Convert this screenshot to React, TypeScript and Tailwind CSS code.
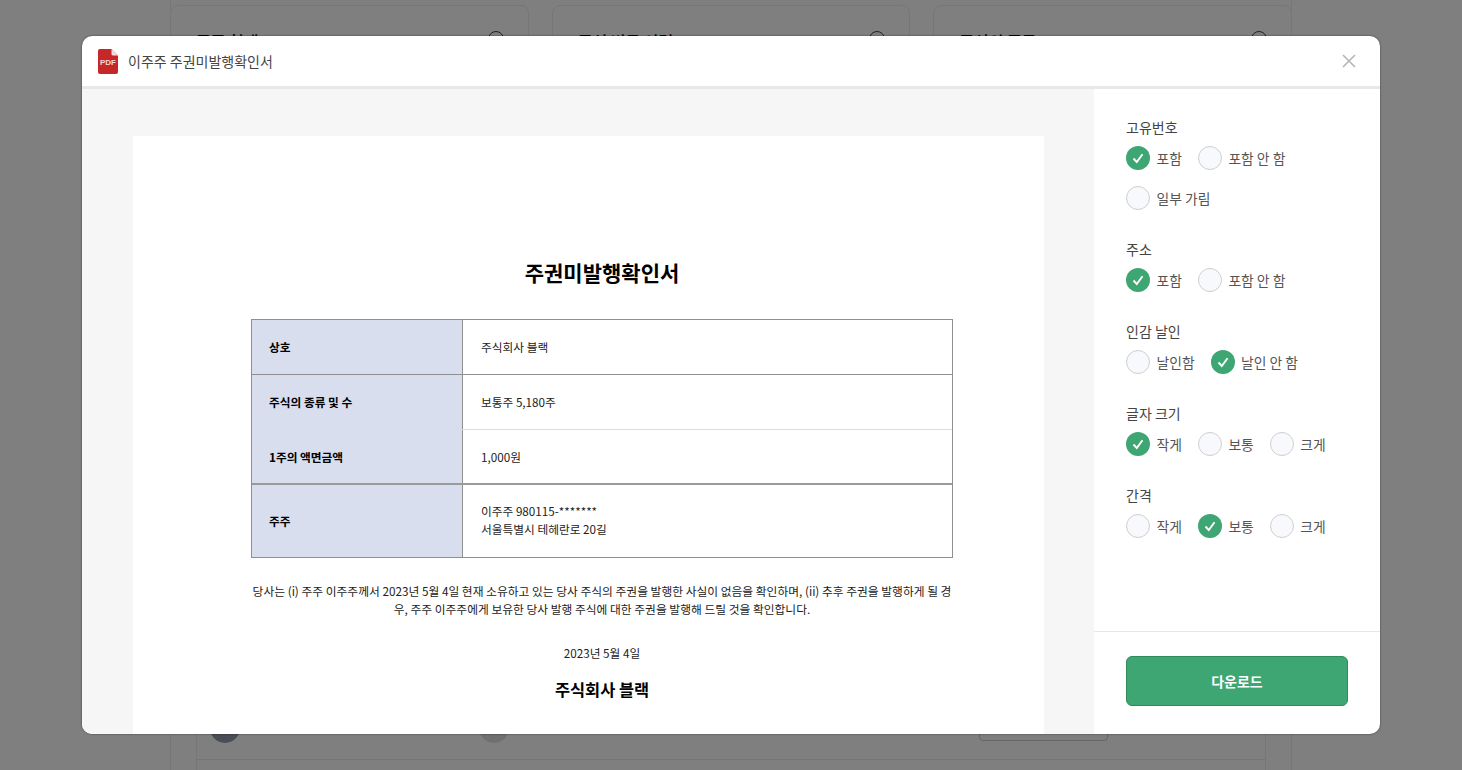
const FONT = "[font-family:'Noto_Sans_CJK_KR','Noto_Sans',sans-serif]";

type Option = { label: string; checked?: boolean };

const GROUPS: { title: string; options: Option[] }[] = [
  {
    title: "고유번호",
    options: [{ label: "포함", checked: true }, { label: "포함 안 함" }, { label: "일부 가림" }],
  },
  { title: "주소", options: [{ label: "포함", checked: true }, { label: "포함 안 함" }] },
  { title: "인감 날인", options: [{ label: "날인함" }, { label: "날인 안 함", checked: true }] },
  {
    title: "글자 크기",
    options: [{ label: "작게", checked: true }, { label: "보통" }, { label: "크게" }],
  },
  {
    title: "간격",
    options: [{ label: "작게" }, { label: "보통", checked: true }, { label: "크게" }],
  },
];

function PdfIcon() {
  return (
    <svg width="20" height="25" viewBox="0 0 20 25" className="shrink-0">
      <path d="M2 0h11.5L20 6.5V23a2 2 0 0 1-2 2H2a2 2 0 0 1-2-2V2a2 2 0 0 1 2-2z" fill="#c62828" />
      <path d="M13.5 0L20 6.5h-5a1.5 1.5 0 0 1-1.5-1.5z" fill="#f6d9d9" />
      <text x="10" y="16" textAnchor="middle" fontSize="8" fontWeight="700" fill="#f6d5d5" fontFamily="Liberation Sans, sans-serif">
        PDF
      </text>
    </svg>
  );
}

function Radio({ label, checked }: Option) {
  return (
    <div className="flex h-6 items-center gap-[6.5px]">
      {checked ? (
        <span className="flex h-6 w-6 items-center justify-center rounded-full bg-[#3da672]">
          <svg width="14" height="14" viewBox="0 0 14 14" fill="none">
            <path d="M2.5 7.5L5.8 11L11.5 3.2" stroke="#fff" strokeWidth="1.9" />
          </svg>
        </span>
      ) : (
        <span className="h-6 w-6 rounded-full border border-[#cfcfcf] bg-[#f8f9fc]" />
      )}
      <span className="text-[13.8px] leading-6 text-[#555]">{label}</span>
    </div>
  );
}

function TableRow({ head, className, children }: { head: string; className: string; children: React.ReactNode }) {
  return (
    <div className={`flex ${className}`}>
      <div className="flex w-[211px] shrink-0 items-center border-r border-[#8f8f8f] bg-[#d9deef] pl-[17px] text-[11.7px] font-bold text-black">
        {head}
      </div>
      <div className="flex flex-1 flex-col justify-center pl-[18px] text-[11.7px] leading-[18px] text-[#222]">{children}</div>
    </div>
  );
}

function BackCard({ title }: { title: string }) {
  return (
    <div className="flex h-[120px] flex-1 items-start justify-between rounded-lg border border-[#777] pl-[25px] pr-[24px] pt-[23px]">
      <span className="text-base font-medium text-black">{title}</span>
      <span className="mt-[2px] h-4 w-4 rounded-full border border-[#222]" />
    </div>
  );
}

export default function App() {
  return (
    <div className={`relative h-[770px] w-[1462px] overflow-hidden bg-[#7f7f7f] ${FONT}`}>
      {/* page behind the dim */}
      <div className="mx-[170px] flex h-full flex-col border-x border-[#777] pt-[5px]">
        <div className="-mx-px flex gap-[23px]">
          <BackCard title="주주 현태" />
          <BackCard title="주식 변동 이력" />
          <BackCard title="주식의 종류" />
        </div>
        <div className="mx-[25px] mt-[584px] flex-1 border-x border-[#777]">
          <div className="flex h-[51px] items-end border-b border-[#747474] pl-[13px]">
            <span className="mb-4 h-[30px] w-[30px] rounded-full bg-[#4a4d55]" />
            <span className="mb-4 ml-[239px] h-[30px] w-[30px] rounded-full bg-[#707070]" />
            <span className="mb-[18px] ml-[470px] h-10 w-[129px] rounded border border-[#666]" />
          </div>
        </div>
      </div>

      {/* modal */}
      <div className="absolute left-[82px] top-9 flex h-[698px] w-[1298px] flex-col overflow-hidden rounded-[10px] bg-white shadow-[0_0_2px_rgba(0,0,0,0.6)]">
        <header className="flex h-[53px] shrink-0 items-center justify-between border-b-[3px] border-[#e8e8e8] pl-4 pr-[23px]">
          <div className="flex items-center gap-[10px]">
            <PdfIcon />
            <span className="text-sm text-[#444]">이주주 주권미발행확인서</span>
          </div>
          <svg width="16" height="16" viewBox="0 0 16 16" fill="none">
            <path d="M2 2L14 14M14 2L2 14" stroke="#b5b5b5" strokeWidth="1.6" />
          </svg>
        </header>

        <div className="flex min-h-0 flex-1">
          <div className="min-w-0 flex-1 overflow-hidden bg-[#f6f6f6] px-[51px] pt-[47px]">
            <div className="h-[700px] w-[911px] bg-white pl-[118px] pr-[91px] pt-[119px]">
              <h1 className="text-center text-[21px] font-bold leading-[34px] text-black">주권미발행확인서</h1>
              <div className="mt-[30px] flex flex-col border border-[#8f8f8f]">
                <TableRow head="상호" className="h-[55px] border-b border-[#8f8f8f]">
                  주식회사 블랙
                </TableRow>
                <TableRow head="주식의 종류 및 수" className="h-[55px] border-b border-[#dcdcdc]">
                  보통주 5,180주
                </TableRow>
                <TableRow head="1주의 액면금액" className="h-[55px] border-b-2 border-[#9a9a9a]">
                  1,000원
                </TableRow>
                <TableRow head="주주" className="h-[72px]">
                  <div className="-mt-[2px]">
                    <p>이주주 980115-*******</p>
                    <p>서울특별시 테헤란로 20길</p>
                  </div>
                </TableRow>
              </div>
              <p className="mt-[24px] text-center text-[11.75px] leading-[18px] text-[#222]">
                당사는 (i) 주주 이주주께서 2023년 5월 4일 현재 소유하고 있는 당사 주식의 주권을 발행한 사실이 없음을 확인하며, (ii) 추후 주권을 발행하게 될 경우, 주주 이주주에게 보유한 당사 발행 주식에 대한 주권을 발행해 드릴 것을 확인합니다.
              </p>
              <p className="mt-[26px] text-center text-[11.7px] leading-[18px] text-[#222]">2023년 5월 4일</p>
              <p className="mt-[15px] text-center text-[16.4px] font-bold leading-6 text-black">주식회사 블랙</p>
            </div>
          </div>

          <aside className="flex w-[286px] shrink-0 flex-col">
            <div className="flex flex-1 flex-col gap-[27px] px-8 pt-[26px]">
              {GROUPS.map((group) => (
                <div key={group.title}>
                  <p className="mb-[7px] text-sm leading-6 text-[#444]">{group.title}</p>
                  <div className="flex flex-wrap gap-4">
                    {group.options.map((option) => (
                      <Radio key={option.label} {...option} />
                    ))}
                  </div>
                </div>
              ))}
            </div>
            <div className="flex h-[103px] shrink-0 items-start border-t border-[#e6e6e6] px-8 pt-6">
              <button className="h-[50px] w-[222px] rounded-md border border-[#2f8a5c] bg-[#3da672] text-sm font-bold text-white">
                다운로드
              </button>
            </div>
          </aside>
        </div>
      </div>
    </div>
  );
}
